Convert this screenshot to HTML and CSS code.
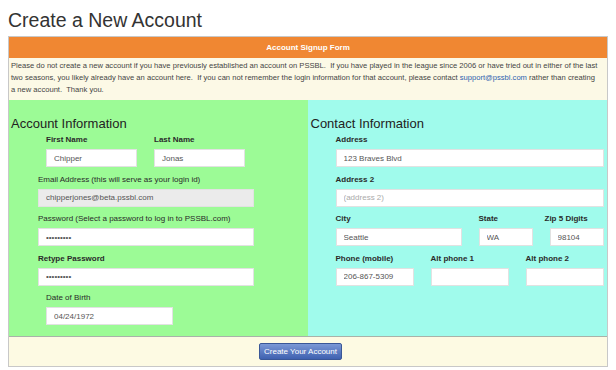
FILE: index.html
```html
<!DOCTYPE html>
<html lang="en">
<head>
    <meta charset="UTF-8" />
    <title>Create a New Account</title>
    <link rel="stylesheet" href="styles.css">
</head>
<body>
    <h1 class="page-title">Create a New Account</h1>
    <form class="signup-panel">
        <div class="panel-heading">Account Signup Form</div>
        <div class="panel-notice">
            Please do not create a new account if you have previously established an account on PSSBL.&nbsp; If you have played in the league since 2006 or have tried out in either of the last two seasons, you likely already have an account here.&nbsp; If you can not remember the login information for that account, please contact <a href="#">support@pssbl.com</a> rather than creating a new account.&nbsp; Thank you.
        </div>
        <div class="panel-columns">
            <div class="col col-account">
                <h2>Account Information</h2>
                <div class="field-row indent-wide">
                    <div class="field">
                        <label class="strong">First Name</label>
                        <input type="text" class="w-name" value="Chipper">
                    </div>
                    <div class="field">
                        <label class="strong">Last Name</label>
                        <input type="text" class="w-name" value="Jonas">
                    </div>
                </div>
                <div class="field indent">
                    <label>Email Address (this will serve as your login id)</label>
                    <input type="text" class="w-email locked" value="chipperjones@beta.pssbl.com" readonly>
                </div>
                <div class="field indent">
                    <label>Password (Select a password to log in to PSSBL.com)</label>
                    <input type="password" class="w-email" value="chipper12">
                </div>
                <div class="field indent">
                    <label class="strong">Retype Password</label>
                    <input type="password" class="w-email" value="chipper12">
                </div>
                <div class="field indent-wide">
                    <label>Date of Birth</label>
                    <input type="text" class="w-dob" value="04/24/1972">
                </div>
            </div>
            <div class="col col-contact">
                <h2>Contact Information</h2>
                <div class="field indent">
                    <label class="strong">Address</label>
                    <input type="text" class="w-address" value="123 Braves Blvd">
                </div>
                <div class="field indent">
                    <label class="strong">Address 2</label>
                    <input type="text" class="w-address" placeholder="(address 2)">
                </div>
                <div class="field-row indent">
                    <div class="field">
                        <label class="strong">City</label>
                        <input type="text" class="w-city" value="Seattle">
                    </div>
                    <div class="field">
                        <label class="strong">State</label>
                        <input type="text" class="w-small" value="WA">
                    </div>
                    <div class="field field-zip">
                        <label class="strong">Zip 5 Digits</label>
                        <input type="text" class="w-small" value="98104">
                    </div>
                </div>
                <div class="field-row indent">
                    <div class="field">
                        <label class="strong">Phone (mobile)</label>
                        <input type="text" class="w-phone" value="206-867-5309">
                    </div>
                    <div class="field">
                        <label class="strong">Alt phone 1</label>
                        <input type="text" class="w-phone">
                    </div>
                    <div class="field">
                        <label class="strong">Alt phone 2</label>
                        <input type="text" class="w-phone">
                    </div>
                </div>
            </div>
        </div>
        <div class="panel-footer">
            <button type="button" class="submit-button">Create Your Account</button>
        </div>
    </form>
</body>
</html>
```

FILE: styles.css
```css
/* page */
body {
    margin: 8px;
    font-family: "Liberation Sans", Arial, sans-serif;
    color: #333;
    background: #fff;
}

.page-title {
    margin: 0 0 4px 0;
    font-size: 19.5px;
    line-height: 24px;
    font-weight: normal;
    color: #333;
}

/* panel */
.signup-panel {
    border: 1px solid #c8c8c8;
    margin: 0;
}

.panel-heading {
    background: #f08732;
    color: #fff;
    font-weight: bold;
    font-size: 8px;
    line-height: 21px;
    height: 21px;
    text-align: center;
}

.panel-notice {
    background: #fcf9e6;
    font-size: 7.6px;
    line-height: 12px;
    padding: 2px 6px 4px 2px;
    color: #444;
}

.panel-notice a {
    color: #2d5fae;
    text-decoration: none;
}

/* two colored columns */
.panel-columns {
    display: flex;
    height: 236px;
    border-bottom: 1px solid #a9b2a9;
}

.col {
    flex: 1;
    padding: 16px 0 0 2px;
}

.col-account {
    background: #9cfb96;
}

.col-contact {
    background: #a0fbec;
    padding-left: 3px;
}

.col h2 {
    margin: 0 0 2px 0;
    font-size: 13px;
    line-height: 16px;
    font-weight: normal;
    color: #222;
}

/* fields */
.field-row {
    display: flex;
    gap: 17px;
    margin-bottom: 6.5px;
}

.field {
    display: flex;
    flex-direction: column;
    align-items: flex-start;
    margin-bottom: 6.5px;
}

.field-row > .field {
    margin-bottom: 0;
}

.indent {
    margin-left: 27px;
}

.indent-wide {
    margin-left: 35px;
}

.col-contact .indent {
    margin-left: 25px;
}

.field label {
    font-size: 8px;
    line-height: 12px;
    color: #2a2a2a;
    margin-bottom: 3px;
}

.field label.strong {
    font-weight: bold;
}

.field input {
    box-sizing: border-box;
    height: 18px;
    margin: 0;
    padding: 0 7px;
    border: 1px solid #e2e2e2;
    background: #fff;
    font-family: "Liberation Sans", Arial, sans-serif;
    font-size: 8px;
    color: #555;
    outline: none;
}

.field input::placeholder {
    color: #aaa;
}

.field input.locked {
    background: #ebebeb;
}

.field-zip label {
    margin-left: -5px;
}

.w-name { width: 91px; }
.w-email { width: 216px; }
.w-dob { width: 127px; }
.w-address { width: 268px; }
.w-city { width: 126px; }
.w-small { width: 54px; }
.w-phone { width: 78px; }

/* footer */
.panel-footer {
    display: flex;
    justify-content: center;
    align-items: flex-start;
    background: #fdfae3;
    height: 29px;
    padding: 6px 15px 0 0;
    box-sizing: border-box;
}

.submit-button {
    height: 17px;
    width: 83px;
    padding: 0;
    border: 1px solid #3a5797;
    border-radius: 2px;
    background: linear-gradient(#7b98d6, #3f61b0);
    color: #fff;
    font-family: "Liberation Sans", Arial, sans-serif;
    font-size: 8px;
    cursor: pointer;
}
```
